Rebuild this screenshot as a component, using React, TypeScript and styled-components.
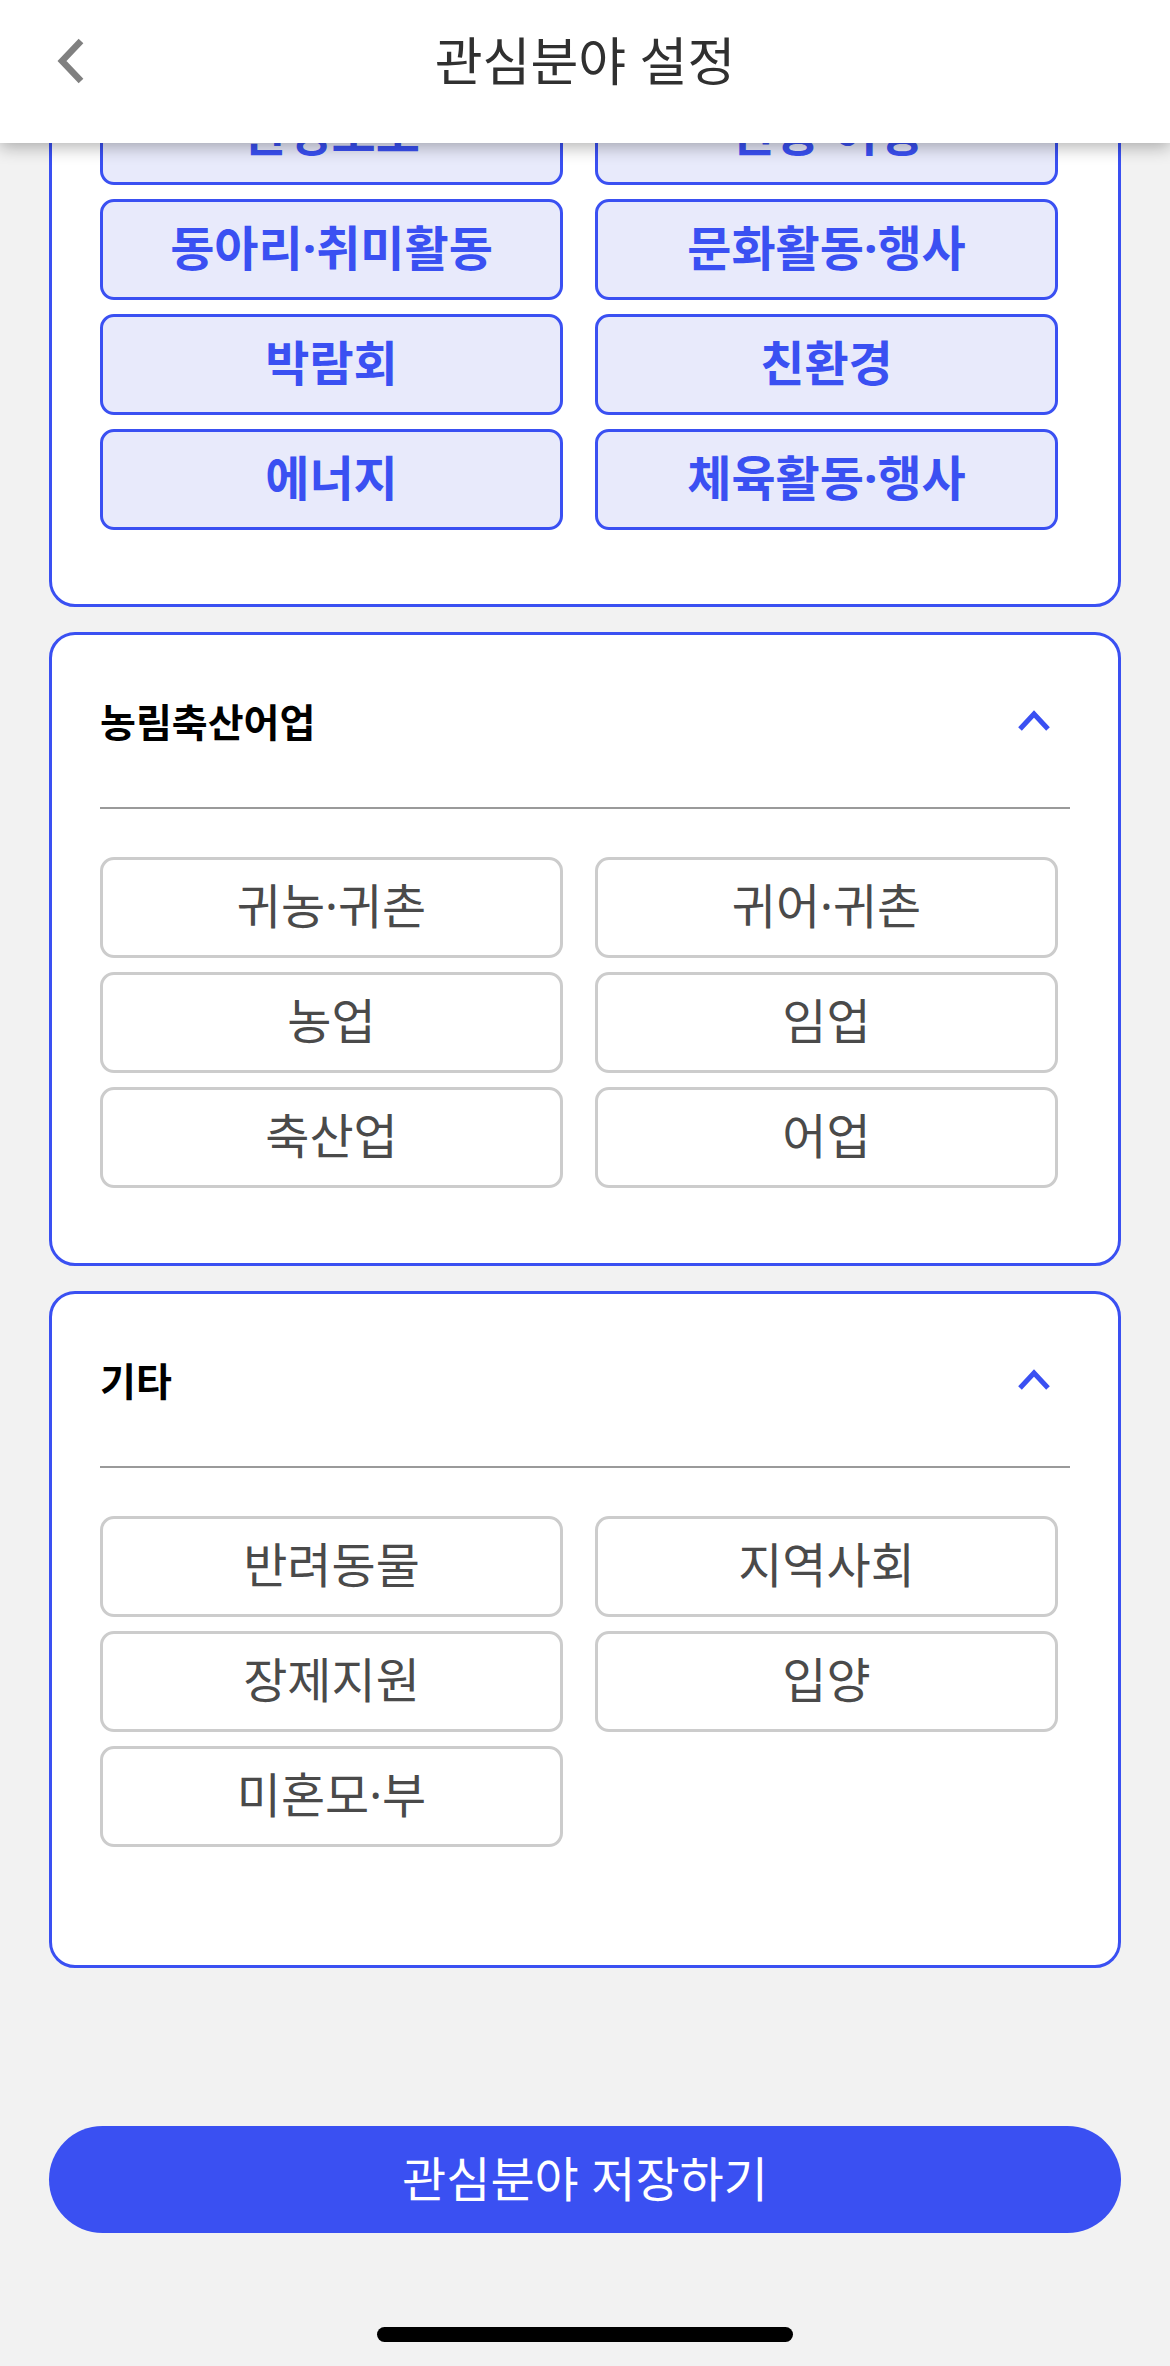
import React from 'react';
import styled, { createGlobalStyle } from 'styled-components';

const BLUE = '#3a50f2';
const FONT = '"Noto Sans", "Noto Sans CJK KR", sans-serif';

const GlobalStyle = createGlobalStyle`
  html, body {
    margin: 0;
    padding: 0;
    background: #f2f2f2;
  }
  * { box-sizing: border-box; }
  body {
    font-family: ${FONT};
  }
`;

const Screen = styled.div`
  width: 1170px;
  height: 2366px;
  display: flex;
  flex-direction: column;
  background: #f2f2f2;
  overflow: hidden;
`;

const Header = styled.header`
  position: relative;
  z-index: 2;
  flex: 0 0 143px;
  height: 143px;
  background: #ffffff;
  box-shadow: 0 4px 16px rgba(0, 0, 0, 0.3);
  display: grid;
  grid-template-columns: 200px 1fr 200px;
  align-items: center;
  padding: 0 0 22px 0;
`;

const BackButton = styled.button`
  border: none;
  background: transparent;
  padding: 0 0 0 56px;
  display: flex;
  align-items: center;
  justify-self: start;
  cursor: pointer;
`;

const Title = styled.h1`
  margin: 0;
  text-align: center;
  font-family: ${FONT};
  font-size: 52px;
  font-weight: 400;
  color: #303030;
  line-height: 1;
`;

const ScrollArea = styled.main`
  position: relative;
  z-index: 1;
  flex: 1 1 auto;
  overflow: hidden;
`;

const ScrollContent = styled.div<{ $offset: number }>`
  margin-top: ${(p) => -p.$offset}px;
  padding: 0 49px;
  display: flex;
  flex-direction: column;
  gap: 25px;
`;

const Card = styled.section<{ $padBottom: number }>`
  background: #ffffff;
  border: 3px solid ${BLUE};
  border-radius: 26px;
  padding: 0 48px ${(p) => p.$padBottom}px 48px;
`;

const CardHeader = styled.div`
  height: 172px;
  display: flex;
  align-items: center;
  justify-content: space-between;
`;

const CardTitle = styled.h2`
  margin: 0;
  font-family: ${FONT};
  font-size: 39px;
  font-weight: 700;
  color: #000000;
  line-height: 1;
`;

const ToggleButton = styled.button`
  border: none;
  background: transparent;
  padding: 0;
  margin-right: 18px;
  display: flex;
  align-items: center;
  cursor: pointer;
`;

const Divider = styled.hr`
  margin: 0;
  border: none;
  height: 2px;
  background: #9a9a9a;
`;

const OptionGrid = styled.div`
  margin-top: 48px;
  display: grid;
  grid-template-columns: 463px 463px;
  grid-auto-rows: 101px;
  column-gap: 32px;
  row-gap: 14px;
`;

const Option = styled.button<{ $selected: boolean }>`
  border: 3px solid ${(p) => (p.$selected ? BLUE : '#cccccc')};
  background: ${(p) => (p.$selected ? '#e8eafb' : '#ffffff')};
  color: ${(p) => (p.$selected ? BLUE : '#4a4a4a')};
  border-radius: 14px;
  font-family: ${FONT};
  font-size: 48px;
  font-weight: ${(p) => (p.$selected ? 700 : 400)};
  line-height: 1;
  display: flex;
  align-items: center;
  justify-content: center;
  padding: 0 0 4px 0;
  cursor: pointer;
`;

const Footer = styled.footer`
  flex: 0 0 240px;
  display: flex;
  flex-direction: column;
  align-items: center;
  padding: 0 49px 24px;
`;

const SaveButton = styled.button`
  width: 100%;
  height: 107px;
  border: none;
  border-radius: 54px;
  background: ${BLUE};
  color: #ffffff;
  font-family: ${FONT};
  font-size: 48px;
  font-weight: 400;
  line-height: 1;
  display: flex;
  align-items: center;
  justify-content: center;
  padding: 0 0 2px 0;
  cursor: pointer;
`;

const HomeIndicator = styled.div`
  margin-top: 94px;
  width: 416px;
  height: 15px;
  border-radius: 8px;
  background: #000000;
`;

type Section = {
  title: string;
  items: { label: string; selected: boolean }[];
  padBottom: number;
};

const sel = (labels: string[], selected: boolean) =>
  labels.map((label) => ({ label, selected }));

const sections: Section[] = [
  {
    title: '문화·여가',
    items: sel(
      ['환경보호', '관광·여행', '동아리·취미활동', '문화활동·행사', '박람회', '친환경', '에너지', '체육활동·행사'],
      true
    ),
    padBottom: 74,
  },
  {
    title: '농림축산어업',
    items: sel(['귀농·귀촌', '귀어·귀촌', '농업', '임업', '축산업', '어업'], false),
    padBottom: 75,
  },
  {
    title: '기타',
    items: sel(['반려동물', '지역사회', '장제지원', '입양', '미혼모·부'], false),
    padBottom: 118,
  },
];

const BackIcon = () => (
  <svg width="30" height="48" viewBox="0 0 30 48" fill="none">
    <polyline
      points="25,4 6,24 25,44"
      stroke="#808080"
      strokeWidth="6.5"
      strokeLinecap="butt"
      strokeLinejoin="miter"
    />
  </svg>
);

const ChevronUp = () => (
  <svg width="36" height="24" viewBox="0 0 36 24" fill="none">
    <polyline
      points="4,20 18,5 32,20"
      stroke={BLUE}
      strokeWidth="5"
      strokeLinecap="butt"
      strokeLinejoin="miter"
    />
  </svg>
);

export default function App() {
  return (
    <>
      <GlobalStyle />
      <Screen>
        <Header>
          <BackButton aria-label="뒤로">
            <BackIcon />
          </BackButton>
          <Title>관심분야 설정</Title>
          <span />
        </Header>
        <ScrollArea>
          <ScrollContent $offset={284}>
            {sections.map((s) => (
              <Card key={s.title} $padBottom={s.padBottom}>
                <CardHeader>
                  <CardTitle>{s.title}</CardTitle>
                  <ToggleButton aria-label="접기">
                    <ChevronUp />
                  </ToggleButton>
                </CardHeader>
                <Divider />
                <OptionGrid>
                  {s.items.map((it) => (
                    <Option key={it.label} $selected={it.selected}>
                      {it.label}
                    </Option>
                  ))}
                </OptionGrid>
              </Card>
            ))}
          </ScrollContent>
        </ScrollArea>
        <Footer>
          <SaveButton>관심분야 저장하기</SaveButton>
          <HomeIndicator />
        </Footer>
      </Screen>
    </>
  );
}
